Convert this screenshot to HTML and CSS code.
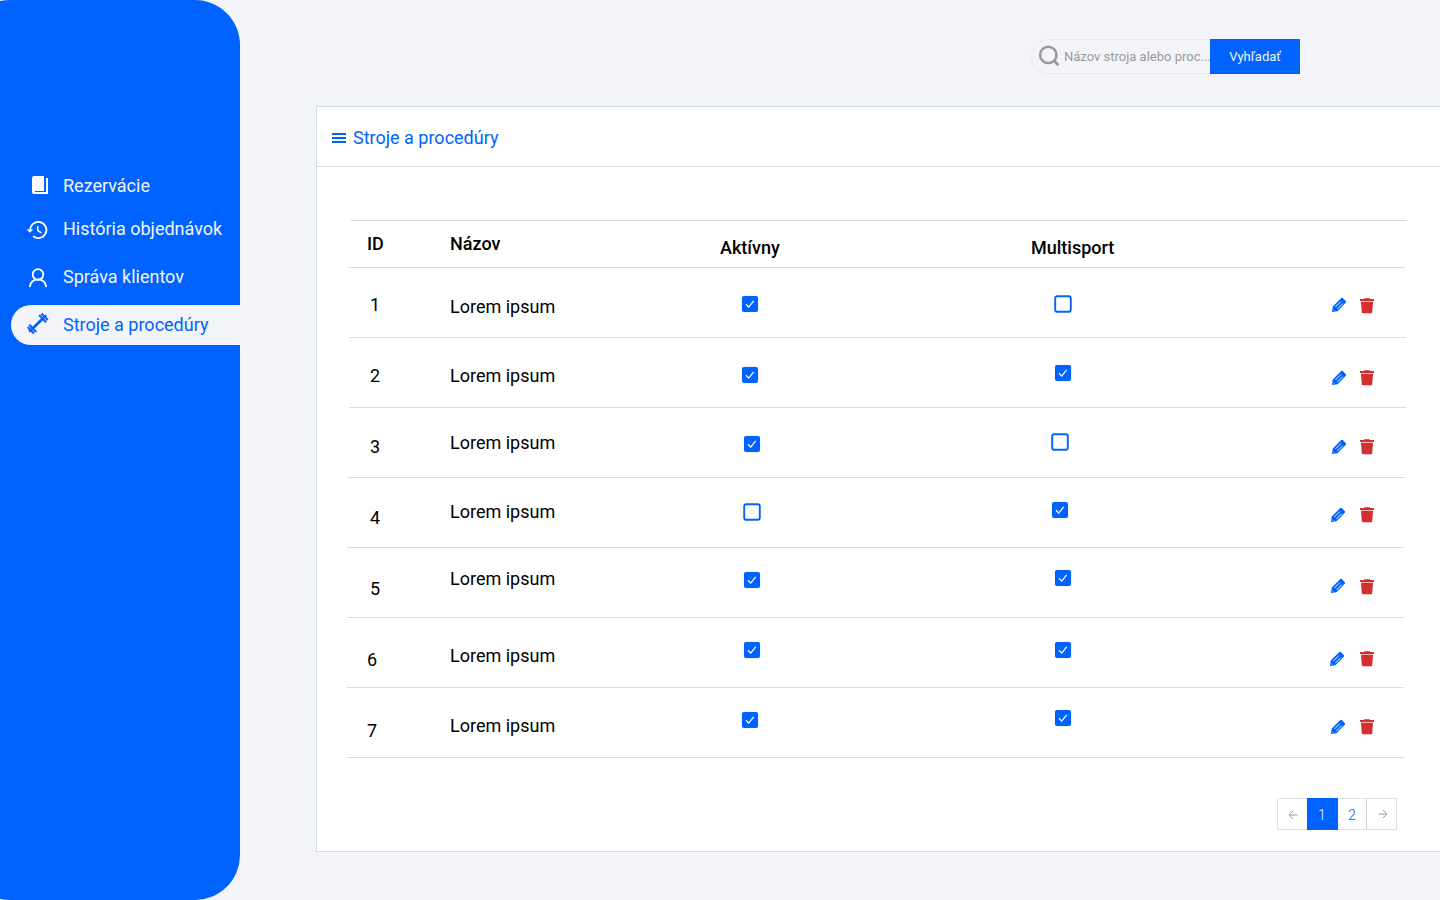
FILE: index.html
```html
<!DOCTYPE html>
<html lang="sk">
<head>
<meta charset="utf-8">
<title>Stroje a procedúry</title>
<link rel="stylesheet" href="styles.css">
</head>
<body>
<svg class="defs" width="0" height="0">
  <symbol id="on" viewBox="0 0 18 18"><rect x=".5" y=".5" width="17" height="17" rx="3" fill="#dfe8f7"/><rect x="1" y="1" width="16" height="16" rx="2" fill="#0063ff"/><path d="M5 9.300l2.700 2.800 5-6.200" fill="none" stroke="#fff" stroke-width="1.300"/></symbol>
  <symbol id="off" viewBox="0 0 18 18"><rect x="1.200" y="1.200" width="15.600" height="15.600" rx="2" fill="#fff" stroke="#0063ff" stroke-width="1.900"/></symbol>
  <symbol id="pencil" viewBox="0 0 16 16"><path d="M.9 15.100l.9-5.700L9.300 1.900l1-.9q.8-.6 1.500.1l3.100 3.100q.6.700.1 1.400L6.500 14.200z" fill="#0063ff"/><path d="M4.400 10l5.400-5.400M6.400 12l5.400-5.400" stroke="#fff" stroke-width=".9" fill="none"/><path d="M1.700 12.300l2 2" stroke="#fff" stroke-width=".4"/></symbol>
  <symbol id="trash" viewBox="0 0 14 16"><path d="M4.500.3h5l.5.700h4v2H0V1h4z" fill="#d32f2f"/><path d="M1 4h12l-.8 10.300q-.1.900-1 .9H2.800q-.9 0-1-.9z" fill="#d32f2f"/><path d="M1 3h12v1H1z" fill="#f0b8b8"/></symbol>
</svg>
<div class="app">
  <aside class="sidebar">
    <nav class="nav">
      <a class="item book"><svg width="24" height="24" viewBox="0 0 24 24"><path d="M6 3h10v15H7v1h11V5h2v16H6q-2 0-2-2V5q0-2 2-2z" fill="#fff"/></svg><span>Rezervácie</span></a>
      <a class="item history"><svg width="24" height="24" viewBox="0 0 24 24"><path d="M5.200 12A8.100 8.100 0 1 1 8 18.100" fill="none" stroke="#fff" stroke-width="1.800"/><path d="M1.600 11.400h6.600L4.900 14.800z" fill="#fff"/><path d="M12.700 8v4.500l3.700 2.300" fill="none" stroke="#fff" stroke-width="1.500"/></svg><span>História objednávok</span></a>
      <a class="item client"><svg width="24" height="24" viewBox="0 0 24 24"><circle cx="12" cy="8.500" r="5.300" fill="none" stroke="#fff" stroke-width="1.800"/><path d="M3.900 21v-.4a8.100 7.200 0 0 1 16.200 0v.4" fill="none" stroke="#fff" stroke-width="1.800"/></svg><span>Správa klientov</span></a>
      <a class="item active"><svg width="24" height="24" viewBox="0 0 24 24"><g transform="translate(11.700 11.500) rotate(-44)" fill="#0063ff"><path d="M-6-1.400H6v2.800H-6zM-12-1h24v2h-24z"/><path d="M-8-5h2.200V5H-8zM-10.700-4.500h2.100v9h-2.100zM5.800-5H8V5H5.800zM8.600-4.500h2.100v9H8.600z"/></g></svg><span>Stroje a procedúry</span></a>
    </nav>
  </aside>
  <main class="main">
    <form class="search">
      <label class="field"><svg width="24" height="24" viewBox="0 0 24 24"><circle cx="10.300" cy="9.900" r="8.200" fill="none" stroke="#999" stroke-width="2.500"/><path d="M15.800 15.500l4.700 4.700" stroke="#999" stroke-width="2.700"/></svg><span>Názov stroja alebo proc...</span></label>
      <button class="go" type="button">Vyhľadať</button>
    </form>
    <section class="panel">
      <header class="panel-head"><svg width="14" height="10" viewBox="0 0 14 10"><path d="M0 0h14v2H0zM0 4h14v2H0zM0 8h14v2H0z" fill="#0063ff"/></svg><h1>Stroje a procedúry</h1></header>
      <div class="table">
        <hr class="rule s3">
        <div class="row head"><b class="id">ID</b><b class="name">Názov</b><b>Aktívny</b><b>Multisport</b></div>
        <hr class="rule s1">
        <div class="row r1"><span class="id">1</span><span class="name">Lorem ipsum</span><svg class="box a"><use href="#on"/></svg><svg class="box m"><use href="#off"/></svg><span class="actions"><svg class="pencil"><use href="#pencil"/></svg><svg class="trash"><use href="#trash"/></svg></span></div>
        <hr class="rule s2">
        <div class="row r2"><span class="id">2</span><span class="name">Lorem ipsum</span><svg class="box a"><use href="#on"/></svg><svg class="box m"><use href="#on"/></svg><span class="actions"><svg class="pencil"><use href="#pencil"/></svg><svg class="trash"><use href="#trash"/></svg></span></div>
        <hr class="rule s2">
        <div class="row r3"><span class="id">3</span><span class="name">Lorem ipsum</span><svg class="box a"><use href="#on"/></svg><svg class="box m"><use href="#off"/></svg><span class="actions"><svg class="pencil"><use href="#pencil"/></svg><svg class="trash"><use href="#trash"/></svg></span></div>
        <hr class="rule s1">
        <div class="row r4"><span class="id">4</span><span class="name">Lorem ipsum</span><svg class="box a"><use href="#off"/></svg><svg class="box m"><use href="#on"/></svg><span class="actions"><svg class="pencil"><use href="#pencil"/></svg><svg class="trash"><use href="#trash"/></svg></span></div>
        <hr class="rule">
        <div class="row r5"><span class="id">5</span><span class="name">Lorem ipsum</span><svg class="box a"><use href="#on"/></svg><svg class="box m"><use href="#on"/></svg><span class="actions"><svg class="pencil"><use href="#pencil"/></svg><svg class="trash"><use href="#trash"/></svg></span></div>
        <hr class="rule">
        <div class="row r6"><span class="id">6</span><span class="name">Lorem ipsum</span><svg class="box a"><use href="#on"/></svg><svg class="box m"><use href="#on"/></svg><span class="actions"><svg class="pencil"><use href="#pencil"/></svg><svg class="trash"><use href="#trash"/></svg></span></div>
        <hr class="rule">
        <div class="row r7"><span class="id">7</span><span class="name">Lorem ipsum</span><svg class="box a"><use href="#on"/></svg><svg class="box m"><use href="#on"/></svg><span class="actions"><svg class="pencil"><use href="#pencil"/></svg><svg class="trash"><use href="#trash"/></svg></span></div>
        <hr class="rule">
      </div>
      <nav class="pager">
        <a class="prev"><svg width="10" height="10" viewBox="0 0 10 10"><path d="M9.500 5H1M5 1L1 5l4 4" fill="none" stroke="#999" stroke-width="1"/></svg></a><a class="current">1</a><a class="page">2</a><a class="next"><svg width="10" height="10" viewBox="0 0 10 10"><path d="M.5 5H9M5 1l4 4-4 4" fill="none" stroke="#999" stroke-width="1"/></svg></a>
      </nav>
    </section>
  </main>
</div>
</body>
</html>
```
FILE: styles.css
```css
* { box-sizing: border-box; }
body { margin: 0; background: #f3f4f9; font: 18px/20px Roboto, sans-serif; color: #000; overflow: hidden; }
.defs { display: block; }
.app { display: flex; height: 900px; }
svg { flex: none; }

.sidebar { width: 275px; margin-left: -35px; padding: 166px 0 0 46px; border-radius: 45px; background: #0063ff; flex: none; }
.nav { display: flex; flex-direction: column; }
.item { display: flex; align-items: center; height: 40px; padding-left: 15px; color: #f3f4f9; white-space: nowrap; }
.item svg { margin-right: 13px; }
.item span { width: 166px; }
.book svg { margin: -2px 11px 0 2px; }
.history { margin-top: 3px; }
.history svg { margin: 1px 14px 0 -1px; }
.client { margin-top: 8px; }
.client svg { margin: 1px 13px 0 0; }
.active { margin-top: 8px; border-radius: 20px 0 0 20px; background: #f3f4f9; color: #0063ff; }
.active svg { margin-top: -2px; }

.main { flex: 1; min-width: 0; padding-left: 76px; }
.search { display: flex; height: 35px; margin: 39px 0 32px 715px; width: 269px; }
.field { display: flex; align-items: center; width: 179px; border: 1px solid #e9eaee; border-right: 0; border-radius: 18px 0 0 18px; padding-left: 6px; color: #999; font-size: 13px; white-space: nowrap; }
.field svg { margin-right: 2px; }
.go { width: 90px; padding: 0; border: 0; background: #0063ff; color: #f3f4f9; font: 13px/20px Roboto, sans-serif; }

.panel { height: 746px; background: #fff; border: 1px solid #d4dde2; border-right: 0; }
.panel-head { display: flex; align-items: center; height: 60px; padding: 2px 0 0 15px; gap: 7px; border-bottom: 1px solid #d4dde2; color: #0063ff; }
h1 { margin: 0; font-size: 18px; font-weight: 400; line-height: 20px; }

.table { padding-top: 53px; }
.rule { width: 1057px; height: 1px; margin: 0 0 0 30px; border: 0; background: #d4dde2; }
.s1 { margin-left: 31px; }
.s2 { margin-left: 32px; }
.s3 { margin-left: 33px; }
.row { display: grid; grid-template-columns: 133px 270px 311px 280px 1fr; height: 69px; align-items: start; }
.row .id { padding: var(--id) 0 0 var(--id-x, 53px); }
.row .name { padding-top: var(--name); }
.head { height: 46px; --id: 13px; --id-x: 50px; --name: 13px; }
.head b { font-weight: 500; padding-top: 17px; }
.box { width: 18px; height: 18px; }
.a { margin: var(--a) 0 0 var(--ax); }
.m { margin: var(--m) 0 0 var(--mx); }
.actions { display: flex; padding: var(--act) 0 0 20px; }
.pencil { width: 16px; height: 16px; margin: var(--py, 0px) 0 0 var(--px, 0px); }
.trash { width: 14px; height: 16px; margin: var(--ty, 0px) 0 0 calc(13px - var(--px, 0px)); }
.r1 { --id: 27px; --name: 29px; --a: 27px; --ax: 21px; --m: 27px; --mx: 23px; --act: 29px; --ty: 1px; }
.r2 { --id: 28px; --name: 28px; --a: 28px; --ax: 21px; --m: 26px; --mx: 23px; --act: 32px; }
.r3 { --id: 29px; --name: 25px; --a: 27px; --ax: 23px; --m: 25px; --mx: 20px; --act: 31px; }
.r4 { --id: 30px; --name: 24px; --a: 25px; --ax: 23px; --m: 23px; --mx: 20px; --act: 29px; --px: -1px; }
.r5 { --id: 31px; --name: 21px; --a: 23px; --ax: 23px; --m: 21px; --mx: 23px; --act: 31px; --px: -1px; --py: -1px; }
.r6 { --id: 32px; --id-x: 50px; --name: 28px; --a: 23px; --ax: 23px; --m: 23px; --mx: 23px; --act: 33px; --px: -2px; }
.r7 { --id: 33px; --id-x: 50px; --name: 28px; --a: 23px; --ax: 21px; --m: 21px; --mx: 23px; --act: 31px; --px: -1px; }

.pager { display: flex; width: 120px; height: 32px; margin: 40px 0 0 960px; border: 1px solid #e0e0e0; font-size: 14px; font-weight: 300; }
.pager a { display: flex; align-items: center; justify-content: center; }
.prev { width: 29px; padding: 2px 0 0 1px; }
.current { width: 31px; margin: -1px 0; padding: 2px 1px 0 0; background: #0063ff; color: #f3f4f9; }
.page { width: 29px; padding-top: 2px; border-right: 1px solid #d2d2d2; color: #0063ff; }
.next { width: 29px; padding-left: 2px; }
```
